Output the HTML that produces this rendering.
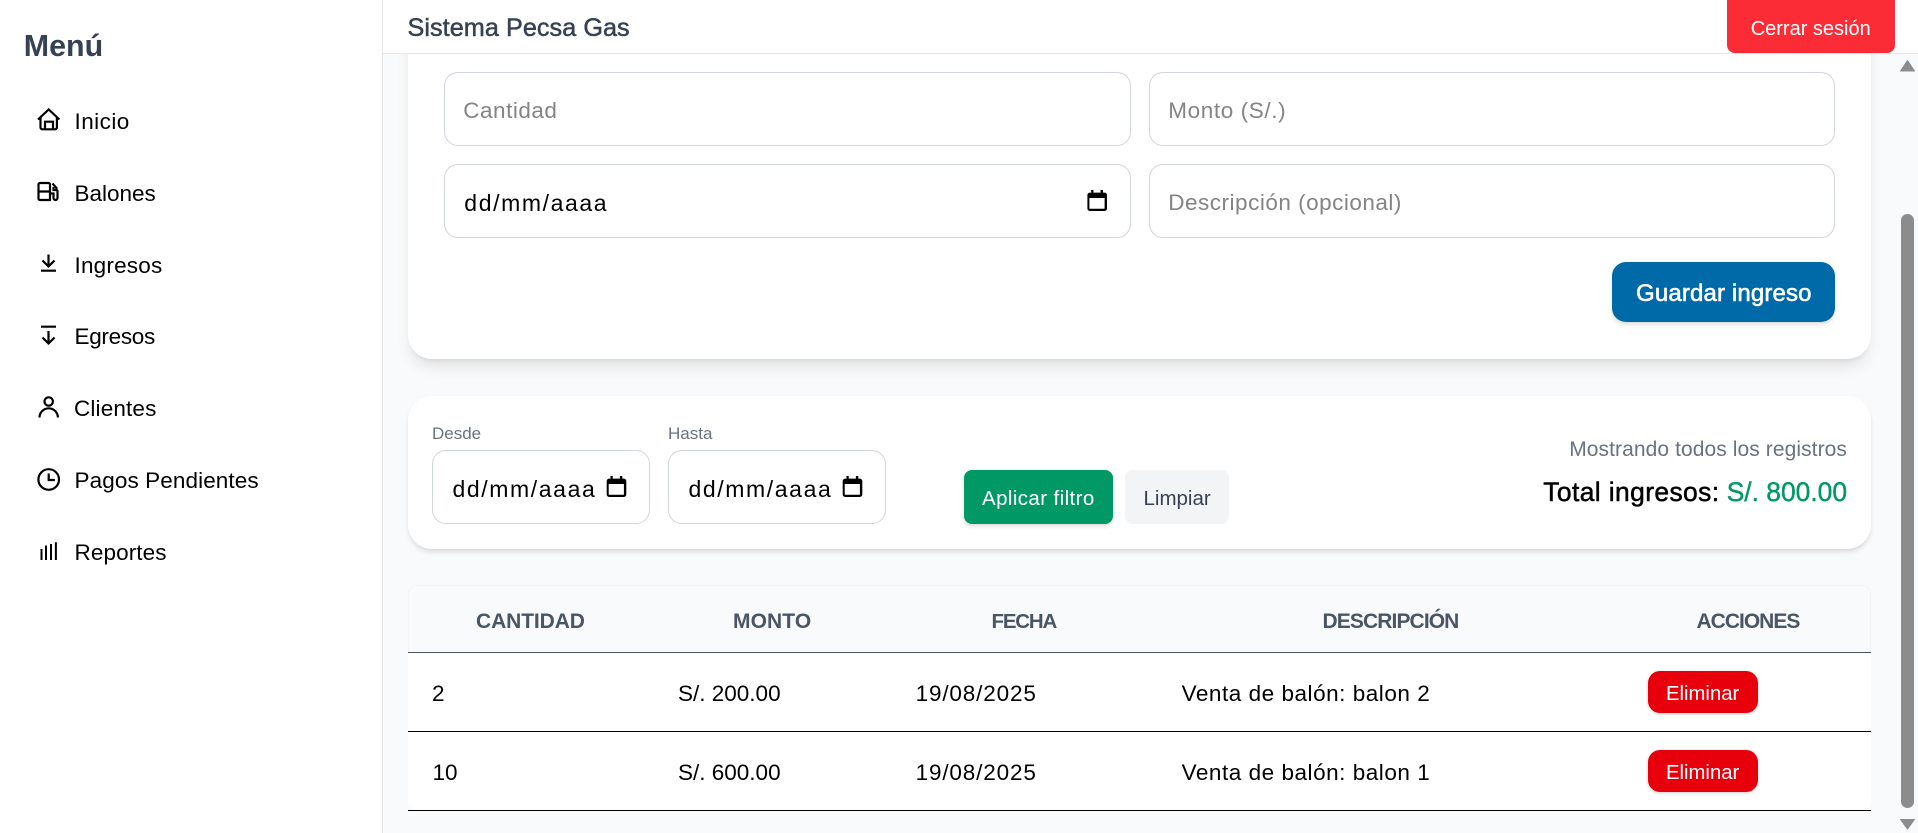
<!DOCTYPE html>
<html lang="es">
<head>
<meta charset="utf-8">
<title>Sistema Pecsa Gas</title>
<style>
html,body{margin:0;padding:0;width:1918px;height:833px;overflow:hidden;background:#f9fafb}
body{position:relative;font-family:"Liberation Sans",Arial,sans-serif;color:#000}
.b{position:absolute;box-sizing:border-box}
.t{position:absolute;white-space:nowrap;line-height:1}
.nav{font-size:22.5px;left:74.5px;color:#000}
.ph{font-size:22.5px;color:#848484}
.date{font-size:23px;letter-spacing:1.6px;color:#000}
.inp{background:#fff;border:1.25px solid #d1d5dc;border-radius:14px}
.th{font-size:21px;font-weight:bold;color:#4a5565;top:610.5px}
.td{font-size:22.5px;color:#000}
.del{background:#e7000b;border-radius:12px;left:1648px;width:110px;height:42px;box-shadow:0 1px 3px rgba(0,0,0,.2)}
.delt{font-size:20.3px;color:#fff;left:1666px}
.line{position:absolute;left:408px;width:1463px;height:1.4px;background:#000}
svg{position:absolute;overflow:visible}
</style>
</head>
<body>

<!-- main content -->
<div class="b" style="left:408px;top:-100px;width:1463px;height:459px;background:#fff;border-radius:24px;box-shadow:0 10px 15px -3px rgba(0,0,0,.1),0 4px 6px -4px rgba(0,0,0,.1)"></div>
<div class="b inp" style="left:444px;top:72px;width:687px;height:74px"></div>
<div class="b inp" style="left:1149px;top:72px;width:686px;height:74px"></div>
<div class="b inp" style="left:444px;top:164px;width:687px;height:74px"></div>
<div class="b inp" style="left:1149px;top:164px;width:686px;height:74px"></div>
<span class="t ph" style="left:463.3px;top:100px;letter-spacing:.5px">Cantidad</span>
<span class="t ph" style="left:1168.3px;top:100px;letter-spacing:.6px">Monto (S/.)</span>
<span class="t date" style="left:464.3px;top:191.5px">dd/mm/aaaa</span>
<span class="t ph" style="left:1168.3px;top:191.7px;letter-spacing:.5px">Descripción (opcional)</span>
<div class="b" style="left:1612px;top:262px;width:223px;height:60px;background:#0069a8;border-radius:14px;box-shadow:0 4px 6px -1px rgba(0,0,0,.1),0 2px 4px -2px rgba(0,0,0,.1)"></div>
<span class="t" style="left:1636px;top:282.4px;font-size:24px;letter-spacing:.15px;color:#fff;-webkit-text-stroke:.6px #fff">Guardar ingreso</span>

<!-- filter -->
<div class="b" style="left:408px;top:396px;width:1463px;height:153px;background:#fff;border-radius:24px;box-shadow:0 4px 6px -1px rgba(0,0,0,.1),0 2px 4px -2px rgba(0,0,0,.1)"></div>
<span class="t" style="left:432px;top:424.6px;font-size:17px;color:#6a7282">Desde</span>
<span class="t" style="left:668px;top:424.6px;font-size:17px;color:#6a7282">Hasta</span>
<div class="b inp" style="left:432px;top:450px;width:218px;height:74px"></div>
<div class="b inp" style="left:668px;top:450px;width:218px;height:74px"></div>
<span class="t date" style="left:452.5px;top:477.8px">dd/mm/aaaa</span>
<span class="t date" style="left:688.5px;top:477.8px">dd/mm/aaaa</span>
<div class="b" style="left:964px;top:470px;width:149px;height:54px;background:#009966;border-radius:8px;box-shadow:0 2px 4px rgba(0,0,0,.15)"></div>
<span class="t" style="left:982px;top:488.6px;font-size:20.5px;letter-spacing:.4px;color:#fff">Aplicar filtro</span>
<div class="b" style="left:1125px;top:470px;width:104px;height:54px;background:#f3f4f6;border-radius:8px"></div>
<span class="t" style="left:1143.5px;top:488.6px;font-size:20.5px;color:#364153">Limpiar</span>
<span class="t" style="right:71px;top:438.9px;font-size:21px;letter-spacing:.08px;color:#6a7282">Mostrando todos los registros</span>
<span class="t" style="left:1543.3px;top:479px;font-size:26.4px;letter-spacing:.4px;color:#000;-webkit-text-stroke:.5px #000">Total ingresos:</span>
<span class="t" style="left:1726.7px;top:479px;font-size:26.4px;color:#009966;-webkit-text-stroke:.4px #009966">S/. 800.00</span>

<!-- calendars -->
<svg style="left:0;top:0" width="1918" height="833" viewBox="0 0 1918 833" fill="none">
  <g id="cals" fill="#000">
    <path d="M1091 190h2.4v2.6h7.2V190h2.4v2.6h1.5a2.5 2.5 0 0 1 2.5 2.5v13.4a2.5 2.5 0 0 1-2.5 2.5h-14.6a2.5 2.5 0 0 1-2.5-2.5v-13.4a2.5 2.5 0 0 1 2.5-2.5h1.5zM1089.4 198v10.2c0 .4.3.6.6.6h14c.3 0 .6-.2.6-.6V198z"/>
    <path d="M610.3 476h2.4v2.6h7.2V476h2.4v2.6h1.5a2.5 2.5 0 0 1 2.5 2.5v13.4a2.5 2.5 0 0 1-2.5 2.5h-14.6a2.5 2.5 0 0 1-2.5-2.5v-13.4a2.5 2.5 0 0 1 2.5-2.5h1.5zM608.7 484v10.2c0 .4.3.6.6.6h14c.3 0 .6-.2.6-.6V484z"/>
    <path d="M846.3 476h2.4v2.6h7.2V476h2.4v2.6h1.5a2.5 2.5 0 0 1 2.5 2.5v13.4a2.5 2.5 0 0 1-2.5 2.5h-14.6a2.5 2.5 0 0 1-2.5-2.5v-13.4a2.5 2.5 0 0 1 2.5-2.5h1.5zM844.7 484v10.2c0 .4.3.6.6.6h14c.3 0 .6-.2.6-.6V484z"/>
  </g>
</svg>

<!-- table -->
<div class="b" style="left:408px;top:585px;width:1463px;height:67px;background:#f9fafb;border:1px solid #f3f4f6;border-bottom:0;border-radius:8px 8px 0 0"></div>
<div class="b" style="left:408px;top:652px;width:1463px;height:158px;background:#fff;border-radius:0 0 8px 8px"></div>
<span class="t th" style="left:476px;letter-spacing:-.1px">CANTIDAD</span>
<span class="t th" style="left:733px;letter-spacing:.1px">MONTO</span>
<span class="t th" style="left:991.5px;top:611.5px;font-size:20.5px;letter-spacing:-1.2px">FECHA</span>
<span class="t th" style="left:1322.5px;letter-spacing:-.9px">DESCRIPCIÓN</span>
<span class="t th" style="left:1696.5px;letter-spacing:-1px">ACCIONES</span>
<div class="line" style="top:652px;background:#4a5565"></div>
<div class="line" style="top:731px"></div>
<div class="line" style="top:810px"></div>

<span class="t td" style="left:432px;top:683.4px">2</span>
<span class="t td" style="left:678px;top:683.4px">S/. 200.00</span>
<span class="t td" style="left:915.6px;top:683.4px;letter-spacing:.85px">19/08/2025</span>
<span class="t td" style="left:1181.6px;top:683.4px;letter-spacing:.53px">Venta de balón: balon 2</span>
<div class="b del" style="top:671px"></div>
<span class="t delt" style="top:683.6px">Eliminar</span>

<span class="t td" style="left:432.5px;top:762.4px">10</span>
<span class="t td" style="left:678px;top:762.4px">S/. 600.00</span>
<span class="t td" style="left:915.6px;top:762.4px;letter-spacing:.85px">19/08/2025</span>
<span class="t td" style="left:1181.6px;top:762.4px;letter-spacing:.53px">Venta de balón: balon 1</span>
<div class="b del" style="top:750px"></div>
<span class="t delt" style="top:762.6px">Eliminar</span>

<!-- scrollbar -->
<div class="b" style="left:1901px;top:214px;width:13px;height:594px;background:#8c8c8c;border-radius:6.5px"></div>
<svg style="left:0;top:0" width="1918" height="833" viewBox="0 0 1918 833">
  <path d="M1907.5 60.5l7 10.5h-14z" fill="#8c8c8c" stroke="#8c8c8c" stroke-linejoin="round"/>
  <path d="M1900.5 819.5h14l-7 9.5z" fill="#8c8c8c" stroke="#8c8c8c" stroke-linejoin="round"/>
</svg>

<!-- header -->
<div class="b" style="left:382px;top:0;width:1536px;height:54px;background:#fff;border-bottom:1.25px solid #e5e7eb"></div>
<span class="t" style="left:407.5px;top:15.7px;font-size:25.2px;letter-spacing:.06px;color:#364153;-webkit-text-stroke:.5px #364153">Sistema Pecsa Gas</span>
<div class="b" style="left:1727px;top:-8px;width:168px;height:61px;background:#fb2c36;border-radius:8px"></div>
<span class="t" style="left:1750.7px;top:19px;font-size:20px;color:#fff">Cerrar sesión</span>

<!-- sidebar -->
<div class="b" style="left:0;top:0;width:383px;height:833px;background:#fff;border-right:1.25px solid #e5e7eb"></div>
<span class="t" style="left:23.8px;top:30.8px;font-size:30.4px;font-weight:bold;color:#364153">Menú</span>

<span class="t nav" style="top:111px;letter-spacing:.45px">Inicio</span>
<span class="t nav" style="top:183px">Balones</span>
<span class="t nav" style="top:255px;letter-spacing:.2px">Ingresos</span>
<span class="t nav" style="top:326px;letter-spacing:-.3px">Egresos</span>
<span class="t nav" style="top:398px;left:74px;letter-spacing:.15px">Clientes</span>
<span class="t nav" style="top:470px;letter-spacing:.1px">Pagos Pendientes</span>
<span class="t nav" style="top:542px;letter-spacing:.1px">Reportes</span>

<svg style="left:0;top:0" width="383" height="833" viewBox="0 0 383 833" fill="none" stroke="#000" stroke-width="2.2">
  <!-- home -->
  <path d="M38 119.5l10.7-10 10.7 10M40.5 117v10.5a1.8 1.8 0 0 0 1.8 1.8h12.8a1.8 1.8 0 0 0 1.8-1.8V117M45 129.3v-7.6h8v7.6"/>
  <!-- balones -->
  <path d="M38.5 184.5a1.5 1.5 0 0 1 1.5-1.5h8.5a1.5 1.5 0 0 1 1.5 1.5V200H40a1.5 1.5 0 0 1-1.5-1.5zM38.5 191.5H50M52.5 183.5l4 4.5v1.5l1 1.5v7a2 2 0 0 1-4 0v-4.5H50M53.5 187v3h3"/>
  <!-- ingresos -->
  <path d="M48.5 254.5v12M42.5 260.5l6 6 6-6M41 270.7h15"/>
  <!-- egresos -->
  <path d="M41 326.7h15M48.5 331v12.5M42.5 337.5l6 6 6-6"/>
  <!-- clientes -->
  <circle cx="48.7" cy="401.5" r="4.2"/>
  <path d="M39.5 417.5a9.2 9.2 0 0 1 18.4 0"/>
  <!-- pagos -->
  <circle cx="48.7" cy="479.5" r="10.3"/>
  <path d="M48.7 473.5v6.5h6.2"/>
  <!-- reportes -->
  <path d="M41.5 560v-11M46 560v-14.5M51 560v-16M55.9 560v-17.7" stroke-width="2"/>
</svg>

</body>
</html>
